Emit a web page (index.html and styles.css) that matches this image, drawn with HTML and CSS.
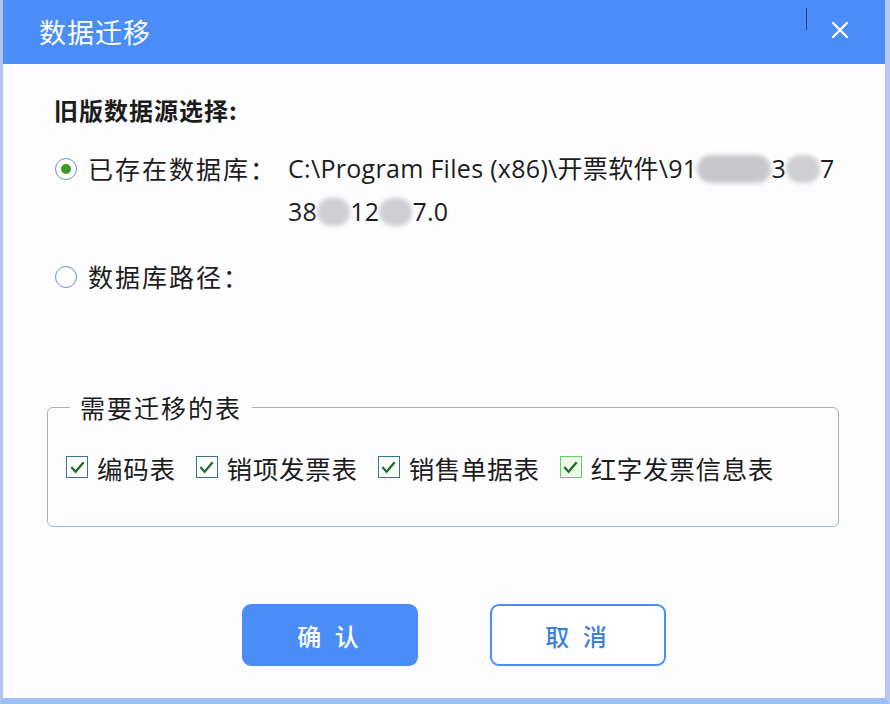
FILE: index.html
```html
<!DOCTYPE html>
<html lang="zh-CN">
<head>
    <meta charset="UTF-8">
    <title>数据迁移</title>
    <link rel="stylesheet" href="styles.css">
</head>
<body>
    <div class="window">
        <div class="titlebar">
            <h1>数据迁移</h1>
            <div class="title-actions">
                <span class="divider"></span>
                <button class="close" aria-label="关闭">
                    <svg width="18" height="18" viewBox="0 0 18 18">
                        <path d="M2 2 L16 16 M16 2 L2 16" stroke="#fff" stroke-width="2.4" stroke-linecap="round"/>
                    </svg>
                </button>
            </div>
        </div>

        <div class="content">
            <h2>旧版数据源选择:</h2>

            <div class="source-row">
                <span class="radio checked"></span>
                <span class="source-label">已存在数据库：</span>
                <span class="path">C:\Program Files (x86)\开票软件\91<span class="mask m1"></span>3<span class="mask m2"></span>7<br>38<span class="mask m3"></span>12<span class="mask m4"></span>7.0</span>
            </div>

            <div class="source-row second">
                <span class="radio"></span>
                <span class="source-label">数据库路径：</span>
            </div>

            <fieldset class="tables">
                <legend>需要迁移的表</legend>
                <label class="check"><span class="box"></span>编码表</label>
                <label class="check"><span class="box"></span>销项发票表</label>
                <label class="check"><span class="box"></span>销售单据表</label>
                <label class="check"><span class="box hover"></span>红字发票信息表</label>
            </fieldset>
        </div>

        <div class="buttons">
            <button class="btn primary">确 认</button>
            <button class="btn">取 消</button>
        </div>
    </div>
</body>
</html>
```

FILE: styles.css
```css
:root {
    --blue: #4a8df6;
    --text: #1c1c1c;
    --cjk: "Noto Sans CJK SC", sans-serif;
    --latin: "Open Sans", "Noto Sans CJK SC", sans-serif;
}
* {
    margin: 0;
    padding: 0;
    box-sizing: border-box;
}
body {
    width: 890px;
    height: 704px;
    overflow: hidden;
    background: #fff;
    font-family: var(--cjk);
    color: var(--text);
}
.window {
    height: 704px;
    display: flex;
    flex-direction: column;
    background: #fdfdff;
    border-left: 3px solid #b3c4f0;
    border-right: 5px solid #b7c8f2;
    border-bottom: 6px solid #9cc1f6;
}
.titlebar {
    height: 64px;
    flex-shrink: 0;
    background: var(--blue);
    display: flex;
    align-items: center;
    justify-content: space-between;
    padding-left: 36px;
}
.titlebar h1 {
    font-weight: 400;
    font-size: 27px;
    letter-spacing: 1px;
    color: #fff;
    margin-top: -2px;
}
.title-actions {
    display: flex;
    align-items: flex-start;
    height: 100%;
}
.divider {
    width: 1px;
    height: 22px;
    margin-top: 8px;
    background: #1c3f8a;
}
.close {
    width: 66px;
    height: 58px;
    margin-right: 12px;
    background: none;
    border: none;
    display: flex;
    align-items: center;
    justify-content: center;
    padding-top: 2px;
}
.content {
    flex: 1;
    padding: 32px 44px 0 44px;
}
h2 {
    font-size: 24px;
    font-weight: 700;
    letter-spacing: 1px;
    line-height: 28px;
    margin-left: 7px;
}
.source-row {
    display: grid;
    grid-template-columns: 22px 189px 1fr;
    column-gap: 11px;
    margin-top: 23px;
    margin-left: 8px;
    font-size: 25px;
    line-height: 43px;
}
.source-row.second {
    margin-top: 22px;
}
.radio {
    width: 22px;
    height: 22px;
    margin-top: 11px;
    border: 1px solid #6d8fb5;
    border-radius: 50%;
    background: #fff;
    position: relative;
}
.radio.checked::after {
    content: "";
    position: absolute;
    left: 5px;
    top: 5px;
    width: 10px;
    height: 10px;
    border-radius: 50%;
    background: #3c9a2c;
}
.source-label {
    letter-spacing: 2px;
}
.path {
    font-family: var(--latin);
    letter-spacing: 0.3px;
}
.mask {
    display: inline-block;
    height: 28px;
    vertical-align: -5px;
    background: #cfced2;
    border-radius: 14px;
    filter: blur(2px);
}
.m1 { width: 74px; background: #c8c7cb; }
.m2 { width: 34px; }
.m3 { width: 33px; }
.m4 { width: 33px; }
.tables {
    margin-top: 97px;
    width: 792px;
    height: 132px;
    border: 1.5px solid #9fb0d2;
    border-radius: 6px;
    padding: 30px 0 0 18px;
    display: flex;
    gap: 20px;
}
.tables legend {
    margin-left: 4px;
    padding: 0 10px;
    font-size: 25px;
    letter-spacing: 2px;
    line-height: 24px;
}
.check {
    display: flex;
    align-items: center;
    gap: 9px;
    font-size: 25.5px;
    letter-spacing: 0.7px;
    height: 36px;
}
.box {
    width: 22px;
    height: 22px;
    border: 1.5px solid #3a7590;
    background: #fff url("data:image/svg+xml,%3Csvg xmlns='http://www.w3.org/2000/svg' width='20' height='20'%3E%3Cpath d='M3.5 9.5 L8 14.5 L16.5 4.5' fill='none' stroke='%231d6e2a' stroke-width='2.4'/%3E%3C/svg%3E") center/19px no-repeat;
}
.box.hover {
    border-color: #5fd35a;
    background-color: #eefbea;
}
.buttons {
    flex-shrink: 0;
    display: flex;
    gap: 72px;
    padding: 0 0 32px 239px;
}
.btn {
    width: 176px;
    height: 62px;
    border-radius: 9px;
    border: 2px solid var(--blue);
    background: #fff;
    color: #3f7fdc;
    font-family: var(--cjk);
    font-size: 24px;
    font-weight: 500;
    letter-spacing: 4px;
}
.btn.primary {
    background: var(--blue);
    color: #fff;
}
```
